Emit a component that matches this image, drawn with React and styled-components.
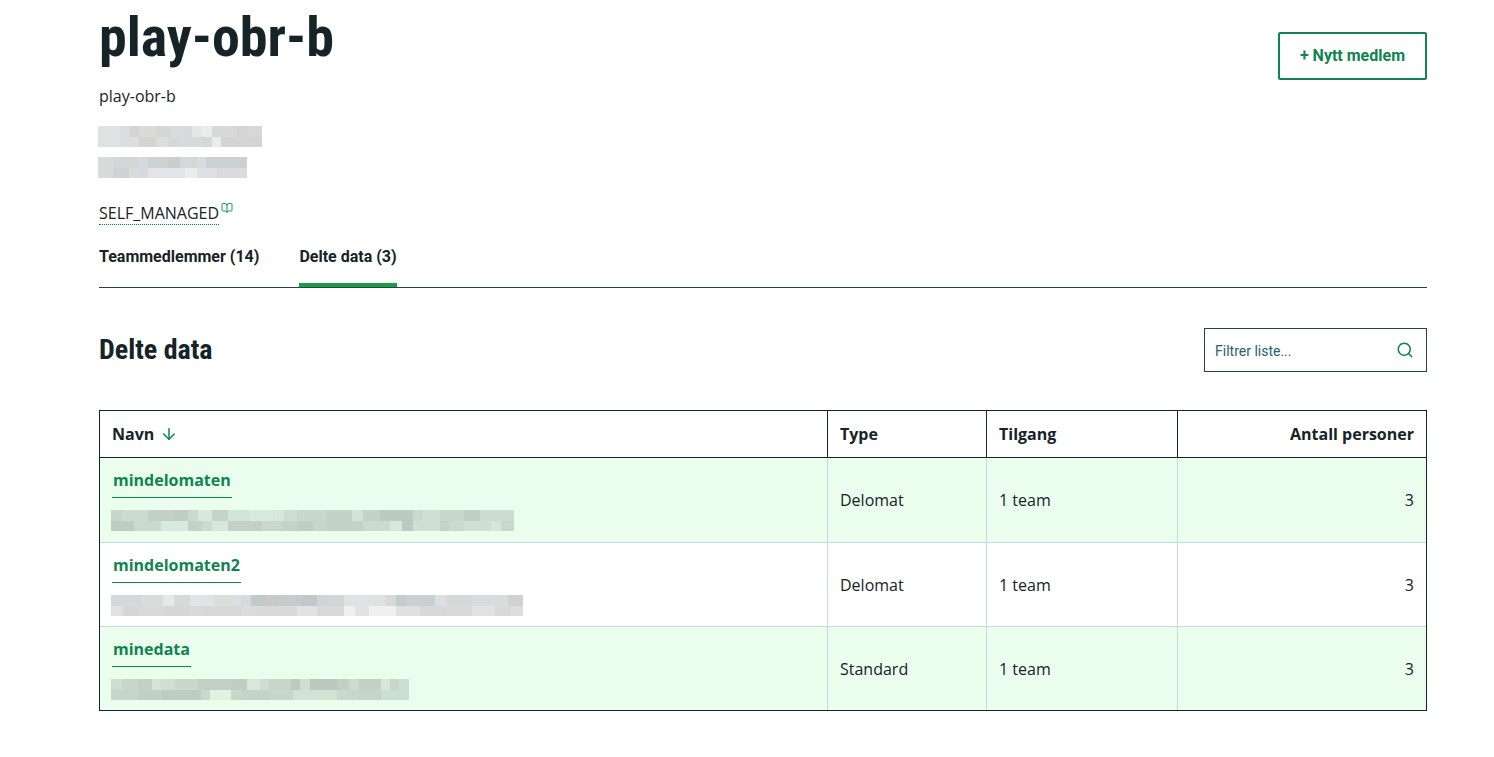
import React, { useState } from "react";
import styled, { createGlobalStyle, ThemeProvider } from "styled-components";
import { ArrowDown, BookOpen, Search } from "lucide-react";

const theme = {
  text: "#162327",
  line: "#274247",
  green: "#0f8450",
  activeGreen: "#1a9d49",
  rowGreen: "#ebfeee",
  cellLine: "#c1dcdb",
  placeholder: "#266270",
};

const GlobalStyle = createGlobalStyle`
  * {
    box-sizing: border-box;
  }

  body {
    margin: 0;
    background-color: #fff;
    color: ${theme.text};
    font-family: "Open Sans", "Noto Sans", sans-serif;
    font-size: 16px;
    line-height: 24px;
  }
`;

const Page = styled.main`
  padding: 0 67px 46px 99px;
`;

const Header = styled.header`
  display: flex;
  justify-content: space-between;
  align-items: flex-start;
`;

const Title = styled.h1`
  margin: 0 0 10px;
  font-family: "Roboto Condensed", Roboto, sans-serif;
  font-size: 56px;
  font-weight: 700;
  line-height: 74px;
`;

const Paragraph = styled.p`
  margin: 0;
`;

const HiddenLines = styled.div`
  display: grid;
  gap: 10px;
  margin-top: 18px;
`;

const Mosaic = styled.svg`
  display: block;
  margin-left: -1px;
`;

const NewMemberButton = styled.button`
  height: 48px;
  margin-top: 32px;
  padding: 0 20px 2px;
  border: 2px solid ${({ theme }) => theme.green};
  border-radius: 2px;
  background-color: #fff;
  color: ${({ theme }) => theme.green};
  font-family: Roboto, sans-serif;
  font-size: 16px;
  font-weight: 700;
  cursor: pointer;
`;

const TermLink = styled.a`
  display: inline-flex;
  align-items: flex-start;
  gap: 2px;
  margin-top: 24px;
  color: inherit;
  line-height: 22px;
  text-decoration: none;

  span {
    border-bottom: 1px dotted ${({ theme }) => theme.green};
  }

  svg {
    color: ${({ theme }) => theme.activeGreen};
  }
`;

const Tabs = styled.div`
  display: flex;
  gap: 40px;
  margin-top: 10px;
  border-bottom: 1px solid ${({ theme }) => theme.line};
`;

const Tab = styled.button`
  height: 52px;
  padding: 0 0 6px;
  border: 0;
  border-bottom: 4px solid
    ${({ theme, $active }) => ($active ? theme.activeGreen : "transparent")};
  background: none;
  color: ${({ theme }) => theme.text};
  font-family: Roboto, sans-serif;
  font-size: 16px;
  font-weight: 700;
  cursor: pointer;
`;

const SectionHeader = styled.div`
  display: flex;
  justify-content: space-between;
  align-items: center;
  margin: 40px 0 38px;
`;

const SectionTitle = styled.h2`
  margin: 0;
  font-family: "Roboto Condensed", Roboto, sans-serif;
  font-size: 28px;
  font-weight: 700;
  line-height: 40px;
`;

const SearchBox = styled.label`
  display: flex;
  align-items: center;
  width: 223px;
  height: 44px;
  padding: 0 12px 0 10px;
  border: 1px solid ${({ theme }) => theme.line};
  color: ${({ theme }) => theme.green};

  input {
    flex: 1;
    min-width: 0;
    padding: 2px 0 0;
    border: 0;
    outline: 0;
    background: none;
    color: ${({ theme }) => theme.text};
    font-family: Roboto, sans-serif;
    font-size: 14px;
  }

  input::placeholder {
    color: ${({ theme }) => theme.placeholder};
    opacity: 1;
  }
`;

const Table = styled.table`
  width: 100%;
  table-layout: fixed;
  border-collapse: separate;
  border-spacing: 0;
  border: 1px solid ${({ theme }) => theme.text};
`;

const Col = styled.col`
  width: ${({ $width }) => $width};
`;

const HeadCell = styled.th`
  height: 47px;
  padding: 0 12px;
  border-bottom: 1px solid ${({ theme }) => theme.text};
  font-weight: 700;
  text-align: ${({ $align }) => $align || "left"};

  &:not(:last-child) {
    border-right: 1px solid ${({ theme }) => theme.text};
  }
`;

const SortLabel = styled.span`
  display: flex;
  align-items: center;
  gap: 6px;

  svg {
    color: ${({ theme }) => theme.green};
  }
`;

const Cell = styled.td`
  padding: 10px 12px;
  text-align: ${({ $align }) => $align || "left"};

  &:not(:last-child) {
    border-right: 1px solid ${({ theme }) => theme.cellLine};
  }
`;

const Row = styled.tr`
  &:nth-child(odd) {
    background-color: ${({ theme }) => theme.rowGreen};
  }

  &:first-child ${Cell} {
    padding-bottom: 11px;
  }

  &:not(:last-child) ${Cell} {
    border-bottom: 1px solid ${({ theme }) => theme.cellLine};
  }
`;

const NameLink = styled.a`
  display: block;
  width: fit-content;
  margin-bottom: 12px;
  padding: 0 1px 5px;
  border-bottom: 1px solid ${({ theme }) => theme.green};
  color: ${({ theme }) => theme.green};
  font-weight: 700;
  text-decoration: none;
`;

// Each mosaic is two strips of "width colour" blocks
const ownerMosaic = [
  "22 e0e2e1,10 dadcdd,9 d3d4d3,17 dadada,15 d5d7d5,9 dadbdb,12 d8dadc,10 e6e7ea,10 ebedec,25 d7d9d9,11 d3d4d3,14 d6d7d9",
  "22 e0e2e1,9 dcdddf,10 dedfdd,17 d4d5d3,12 dddedc,12 d7d8d8,22 d9dadc,10 d6d8d6,9 ebeceb,41 d4d5d3",
];

const sectionMosaic = [
  "15 d9dbda,25 d4d6d8,10 d8d9dc,20 ced2d3,12 cbcdcf,17 d5d7d9,9 d9dbdf,41 ccd0d1",
  "15 d9dbda,16 ced3d4,9 dadcdb,10 d8d9dc,37 e3e4e7,12 ebedec,20 dee0e3,30 dadcdb",
];

const rows = [
  {
    name: "mindelomaten",
    type: "Delomat",
    access: "1 team",
    people: 3,
    mosaic: [
      "11 c6d7ca,26 cbdccf,26 c2d1c5,14 bfcdc2,10 c9d9cc,14 d6e9da,16 c4d4c7,22 d3e5d7,23 d8eadc,11 d5e7d9,13 cdded1,29 c9d8cc,26 c3d3c6,11 d3e4d7,17 c3d3c7,33 bccbc1,10 c9d9cd,17 d0e1d4,24 c8d8cb,16 bfcfc3,11 ccdcd0,23 cddcd1",
      "23 bdcdc2,27 c9dacd,27 d8eadc,14 c4d3c7,10 cbdbce,16 d5e8d9,34 c1d1c4,20 c9d8cb,16 c4d3c7,15 bfcec2,13 c6d7ca,37 c3d3c6,27 cbdbcf,12 d6e8da,11 bccbc1,27 cfe0d3,9 c3d3c7,15 cadacd,27 cfdfd2,10 d5e7d9,13 c8d8cb",
    ],
  },
  {
    name: "mindelomaten2",
    type: "Delomat",
    access: "1 team",
    people: 3,
    mosaic: [
      "30 d6d7d9,22 d9dbdc,11 e7e9e7,16 d8dad8,24 e1e3e6,18 dcdedc,9 dddee1,10 d8d9dd,15 c4c8ca,12 c7c9cb,24 c9cacc,15 c3c7c9,10 d1d3d5,17 d4d6d5,25 e1e2e5,16 e0e2e1,11 d7d9d8,10 c5cacb,29 cacfd0,12 dddee1,25 d6d8d8,23 d9dadc,13 dadcdb,15 ced2d3",
      "12 e0e2e1,15 d5d6d9,25 d8d9da,27 d4d6d8,13 d8d9d9,38 d6d7d9,9 dadbdf,47 d9dbda,20 e1e2e5,27 d8d9db,11 eff1ef,14 e1e2e5,27 eff1f0,24 dfe0e1,27 d7d8db,25 d9dbda,23 e1e2e4,16 d8dad9,12 dcdddf",
    ],
  },
  {
    name: "minedata",
    type: "Standard",
    access: "1 team",
    people: 3,
    mosaic: [
      "11 ceddd0,16 c6d6c9,14 c2d1c5,9 d4e4d6,14 cfdfd2,23 c8d8cb,33 c1d0c4,16 bfcec3,13 d7e8d9,9 ceddd0,22 c6d6c9,9 bbcabf,10 cfe0d3,27 bac9be,12 c1cfc4,10 cbdbce,22 c2d1c5,9 d7e7da,9 c7d7ca,10 cddfd1",
      "27 c6d6c9,23 c1d0c4,40 becdc2,9 c9d9cc,21 e1f2e4,11 c7d7ca,27 c5d4c8,24 c8d7cb,44 d2e2d5,9 c9dacd,13 c8d8cb,22 c5d5c9,28 cddfd1",
    ],
  },
];

function HiddenText({ strips }) {
  const blocks = [];
  let total = 0;

  strips.forEach((strip, index) => {
    let x = 0;
    strip.split(",").forEach((block) => {
      const [width, color] = block.split(" ");
      blocks.push(
        <rect
          key={`${index}-${x}`}
          x={x}
          y={index * 11}
          width={width}
          height={index ? 10 : 11}
          fill={`#${color}`}
        />
      );
      x += Number(width);
    });
    total = Math.max(total, x);
  });

  return (
    <Mosaic width={total} height={21} shapeRendering="crispEdges" aria-hidden="true">
      {blocks}
    </Mosaic>
  );
}

function App() {
  const [activeTab, setActiveTab] = useState("data");
  const [filter, setFilter] = useState("");

  const visibleRows = rows.filter((row) => row.name.includes(filter.toLowerCase()));

  return (
    <ThemeProvider theme={theme}>
      <GlobalStyle />
      <Page>
        <Header>
          <div>
            <Title>play-obr-b</Title>
            <Paragraph>play-obr-b</Paragraph>
            <HiddenLines>
              <HiddenText strips={ownerMosaic} />
              <HiddenText strips={sectionMosaic} />
            </HiddenLines>
            <TermLink href="#self-managed">
              <span>SELF_MANAGED</span>
              <BookOpen size={12} />
            </TermLink>
          </div>
          <NewMemberButton type="button">+ Nytt medlem</NewMemberButton>
        </Header>

        <Tabs role="tablist">
          <Tab
            type="button"
            role="tab"
            aria-selected={activeTab === "members"}
            $active={activeTab === "members"}
            onClick={() => setActiveTab("members")}
          >
            Teammedlemmer (14)
          </Tab>
          <Tab
            type="button"
            role="tab"
            aria-selected={activeTab === "data"}
            $active={activeTab === "data"}
            onClick={() => setActiveTab("data")}
          >
            Delte data (3)
          </Tab>
        </Tabs>

        <SectionHeader>
          <SectionTitle>Delte data</SectionTitle>
          <SearchBox>
            <input
              type="text"
              placeholder="Filtrer liste..."
              aria-label="Filtrer liste"
              value={filter}
              onChange={(e) => setFilter(e.target.value)}
            />
            <Search size={18} />
          </SearchBox>
        </SectionHeader>

        <Table>
          <colgroup>
            <Col />
            <Col $width="159px" />
            <Col $width="191px" />
            <Col $width="248px" />
          </colgroup>
          <thead>
            <tr>
              <HeadCell>
                <SortLabel>
                  Navn
                  <ArrowDown size={18} />
                </SortLabel>
              </HeadCell>
              <HeadCell>Type</HeadCell>
              <HeadCell>Tilgang</HeadCell>
              <HeadCell $align="right">Antall personer</HeadCell>
            </tr>
          </thead>
          <tbody>
            {visibleRows.map((row) => (
              <Row key={row.name}>
                <Cell>
                  <NameLink href={`#${row.name}`}>{row.name}</NameLink>
                  <HiddenText strips={row.mosaic} />
                </Cell>
                <Cell>{row.type}</Cell>
                <Cell>{row.access}</Cell>
                <Cell $align="right">{row.people}</Cell>
              </Row>
            ))}
          </tbody>
        </Table>
      </Page>
    </ThemeProvider>
  );
}

export default App;
